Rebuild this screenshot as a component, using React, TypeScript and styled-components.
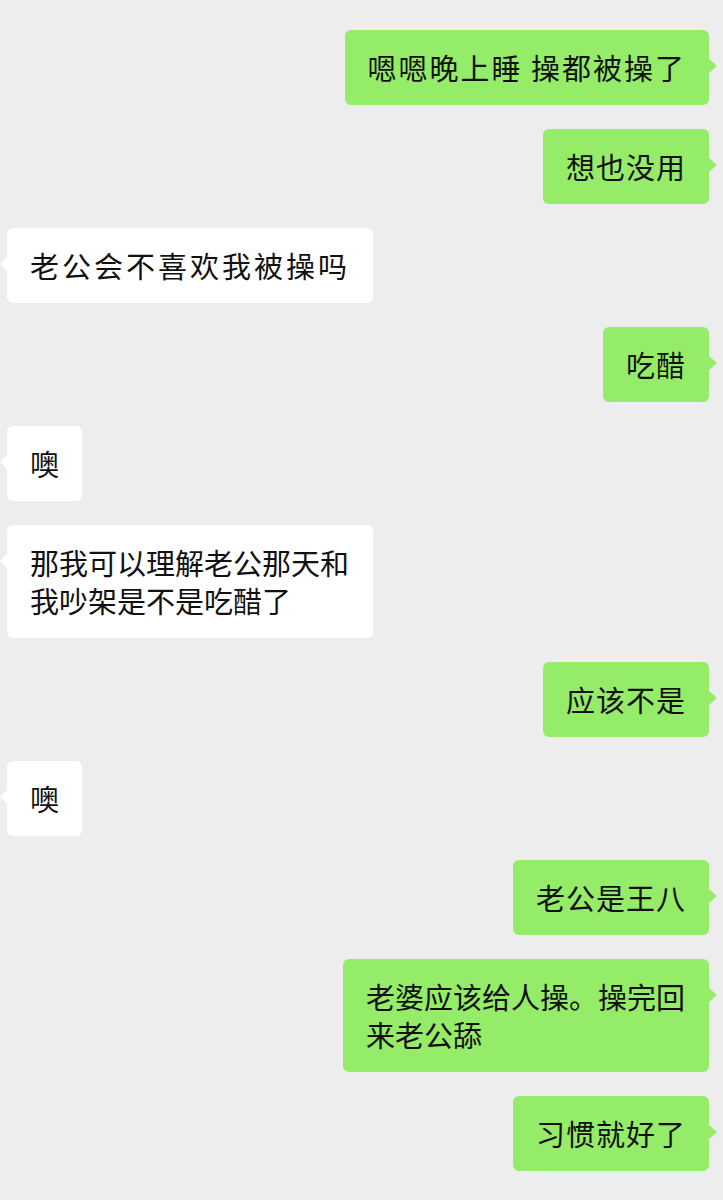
import React from "react";
import styled, { createGlobalStyle } from "styled-components";

const Global = createGlobalStyle`
  html, body {
    margin: 0;
    padding: 0;
    background: #ededed;
  }
  body {
    font-family: "Noto Sans CJK SC", "Noto Sans", sans-serif;
  }
`;

const Chat = styled.div`
  width: 723px;
  min-height: 1200px;
  box-sizing: border-box;
  background: #ededed;
  padding: 30px 14px 30px 7px;
  display: flex;
  flex-direction: column;
  gap: 24px;
`;

const Row = styled.div<{ $mine: boolean }>`
  display: flex;
  justify-content: ${(p) => (p.$mine ? "flex-end" : "flex-start")};
`;

const Bubble = styled.div<{ $mine: boolean; $spread?: number }>`
  position: relative;
  max-width: 366px;
  box-sizing: border-box;
  padding: 18px 23px 19px;
  border-radius: 6px;
  background: ${(p) => (p.$mine ? "#95ec69" : "#ffffff")};
  color: #111111;
  font-size: 29px;
  line-height: 38px;
  letter-spacing: ${(p) => p.$spread ?? 0}px;
  white-space: pre-wrap;
  word-break: break-all;

  &::after {
    content: "";
    position: absolute;
    top: 29px;
    width: 0;
    height: 0;
    border-top: 7px solid transparent;
    border-bottom: 7px solid transparent;
    ${(p) =>
      p.$mine
        ? `right: -8px; border-left: 8px solid #95ec69;`
        : `left: -7px; border-right: 7px solid #ffffff;`}
  }
`;

type Msg = { mine: boolean; text: string; spread?: number };

const messages: Msg[] = [
  { mine: true, text: "嗯嗯晚上睡 操都被操了", spread: 2 },
  { mine: true, text: "想也没用", spread: 1 },
  { mine: false, text: "老公会不喜欢我被操吗", spread: 3 },
  { mine: true, text: "吃醋", spread: 1 },
  { mine: false, text: "噢" },
  { mine: false, text: "那我可以理解老公那天和我吵架是不是吃醋了" },
  { mine: true, text: "应该不是", spread: 1 },
  { mine: false, text: "噢" },
  { mine: true, text: "老公是王八", spread: 1 },
  { mine: true, text: "老婆应该给人操。操完回来老公舔" },
  { mine: true, text: "习惯就好了", spread: 1 },
];

export default function App() {
  return (
    <>
      <Global />
      <Chat>
        {messages.map((m, i) => (
          <Row key={i} $mine={m.mine}>
            <Bubble $mine={m.mine} $spread={m.spread}>
              {m.text}
            </Bubble>
          </Row>
        ))}
      </Chat>
    </>
  );
}
